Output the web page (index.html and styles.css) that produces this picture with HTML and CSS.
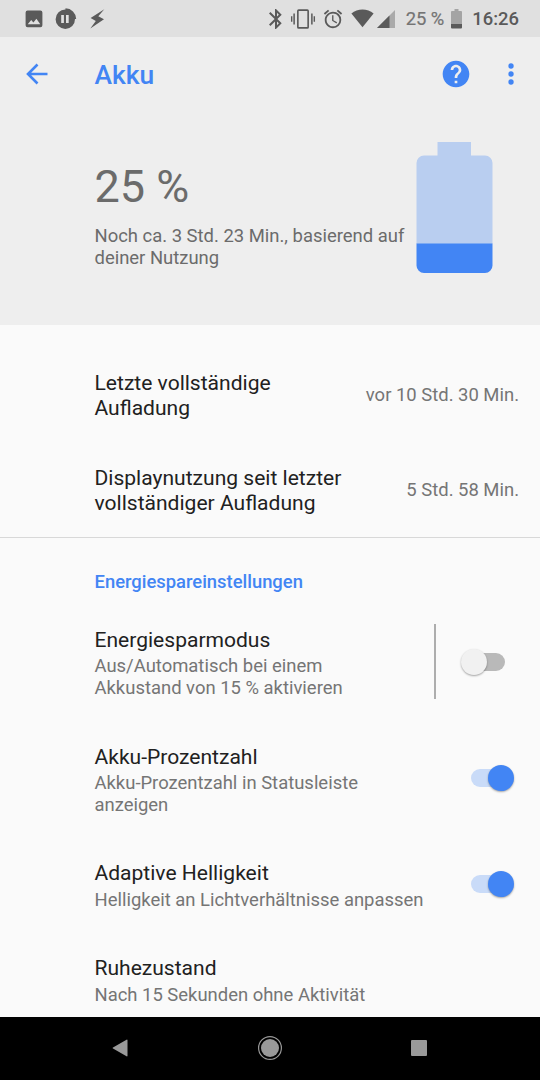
FILE: index.html
```html
<!DOCTYPE html>
<html lang="de">
<head>
  <meta charset="UTF-8">
  <meta name="viewport" content="width=device-width, initial-scale=1.0">
  <title>Akku</title>
  <link rel="stylesheet" href="styles.css">
</head>
<body>
  <!-- status bar: notifications left, system icons right -->
  <div class="status-bar">
    <div class="notifications">
      <svg width="18" height="18" viewBox="0 0 18 18"><path fill-rule="evenodd" d="M2.600.5h12.800a2 2 0 0 1 2 2v12.800a2 2 0 0 1-2 2H2.600a2 2 0 0 1-2-2V2.500a2 2 0 0 1 2-2zM2.700 14.300h12.600l-3.900-5.600-3 3.800-2.200-2.400z"/></svg>
      <svg width="22" height="22" viewBox="0 0 22 22"><path fill-rule="evenodd" d="M10.500.3A11 11 0 0 1 21.200 11H20a9.700 9.700 0 1 1-9.500-9.500zM6.200 7v8h2.700V7zM11 7v8h2.700V7z"/></svg>
      <svg class="bolt" width="15" height="20" viewBox="0 0 15 20"><path d="M14.300.3 8.300 7.200l5.700 3.100L.3 19.500l5.500-7.400L.6 9z"/></svg>
    </div>
    <div class="system">
      <svg width="24" height="24" viewBox="0 0 24 24"><path d="M17.710 7.710L12 2h-1v7.590L6.410 5 5 6.410 10.590 12 5 17.590 6.410 19 11 14.410V22h1l5.710-5.710-4.300-4.290 4.300-4.290zM13 5.830l1.880 1.880L13 9.590V5.830zm1.880 10.460L13 18.170v-3.760l1.880 1.880z"/></svg>
      <svg class="vibrate" width="26" height="26" viewBox="0 0 24 24"><path d="M.9 14.500h1.300v-5H.9zm2.200 2.500h1.400V7H3.100zm18.700-7.500v5h1.300v-5zM19.500 17h1.400V7h-1.400zM16 3H8a1.500 1.500 0 0 0-1.500 1.500v15A1.500 1.500 0 0 0 8 21h8a1.500 1.500 0 0 0 1.500-1.500v-15A1.500 1.500 0 0 0 16 3zm0 16.400H8V4.600h8z"/></svg>
      <svg class="alarm" width="22" height="22" viewBox="0 0 24 24"><path d="M22 5.720l-4.600-3.860-1.290 1.530 4.600 3.860L22 5.720zM7.880 3.390L6.600 1.860 2 5.710l1.290 1.530 4.590-3.850zM12.500 8H11v6l4.750 2.850.75-1.230-4-2.370V8zM12 4c-4.970 0-9 4.030-9 9s4.020 9 9 9a9 9 0 0 0 0-18zm0 16c-3.870 0-7-3.130-7-7s3.130-7 7-7 7 3.130 7 7-3.130 7-7 7z"/></svg>
      <svg class="wifi" width="23" height="19" viewBox="0 0 23 19"><path d="M11.500 18.300.4 4.400C3.500 2 7.400.6 11.500.6S19.500 2 22.600 4.400z"/></svg>
      <svg class="signal" width="18" height="18" viewBox="0 0 18 18"><path opacity=".4" d="M0 18 18 0v18z"/><path d="M0 18 12.500 5.500V18z"/></svg>
      <span class="percent">25 %</span>
      <svg class="battery" width="11" height="20" viewBox="0 0 11 20"><path opacity=".45" d="M3.500 0h4v2H10a1 1 0 0 1 1 1v12H0V3a1 1 0 0 1 1-1h2.500z"/><path d="M0 15h11v3.500a1 1 0 0 1-1 1H1a1 1 0 0 1-1-1z"/></svg>
      <span class="clock">16:26</span>
    </div>
  </div>

  <!-- toolbar -->
  <header>
    <svg class="back" width="22" height="22" viewBox="0 0 22 22"><path d="M21.500 11H2.500M11.500 1.500 2 11l9.500 9.500"/></svg>
    <h1>Akku</h1>
    <svg class="help" width="32" height="32" viewBox="0 0 24 24"><path d="M12 2C6.480 2 2 6.480 2 12s4.480 10 10 10 10-4.480 10-10S17.520 2 12 2zm1 17h-2v-2h2v2zm2.070-7.750l-.9.920C13.450 12.900 13 13.500 13 15h-2v-.5c0-1.100.45-2.100 1.170-2.830l1.240-1.260c.37-.36.590-.860.590-1.410 0-1.100-.9-2-2-2s-2 .9-2 2H8c0-2.210 1.790-4 4-4s4 1.790 4 4c0 .880-.360 1.680-.930 2.250z"/></svg>
    <svg class="more" width="6" height="22" viewBox="0 0 6 22"><circle cx="3" cy="3" r="2.700"/><circle cx="3" cy="11" r="2.700"/><circle cx="3" cy="19" r="2.700"/></svg>
  </header>

  <!-- battery summary -->
  <section class="summary">
    <div class="summary-text">
      <div class="level">25 %</div>
      <p>Noch ca. 3 Std. 23 Min., basierend auf deiner Nutzung</p>
    </div>
    <svg class="big-battery" width="77" height="131" viewBox="0 0 77 131"><path fill="#b9cef0" d="M21.500 0H55v13.500h14a7.500 7.500 0 0 1 7.500 7.500v81H.5V21A7.500 7.500 0 0 1 8 13.500h13.500z"/><path fill="#4285f4" d="M.5 101.500h76v22a7.500 7.500 0 0 1-7.500 7.500H8a7.500 7.500 0 0 1-7.500-7.500z"/></svg>
  </section>

  <main>
    <section class="usage">
      <div class="usage-row">
        <h2>Letzte vollständige Aufladung</h2>
        <span>vor 10 Std. 30 Min.</span>
      </div>
      <div class="usage-row">
        <h2>Displaynutzung seit letzter vollständiger Aufladung</h2>
        <span>5 Std. 58 Min.</span>
      </div>
    </section>

    <section class="settings">
      <h3>Energiespareinstellungen</h3>
      <div class="setting">
        <div class="setting-text narrow">
          <h2>Energiesparmodus</h2>
          <p>Aus/Automatisch bei einem Akkustand von 15 % aktivieren</p>
        </div>
        <div class="separator"></div>
        <div class="switch off"></div>
      </div>
      <div class="setting">
        <div class="setting-text">
          <h2>Akku-Prozentzahl</h2>
          <p>Akku-Prozentzahl in Statusleiste anzeigen</p>
        </div>
        <div class="switch on"></div>
      </div>
      <div class="setting">
        <div class="setting-text">
          <h2>Adaptive Helligkeit</h2>
          <p>Helligkeit an Lichtverhältnisse anpassen</p>
        </div>
        <div class="switch on"></div>
      </div>
      <div class="setting">
        <div class="setting-text">
          <h2>Ruhezustand</h2>
          <p>Nach 15 Sekunden ohne Aktivität</p>
        </div>
      </div>
    </section>
  </main>

  <!-- android navigation bar -->
  <nav>
    <svg width="26" height="26" viewBox="0 0 26 26"><path d="M20.500 5.300v15.400a.7.700 0 0 1-1 .6L6 13.600a.7.700 0 0 1 0-1.200l13.500-7.700a.7.700 0 0 1 1 .6z"/></svg>
    <svg width="26" height="26" viewBox="0 0 26 26"><circle cx="13" cy="13" r="9"/><circle class="ring" cx="13" cy="13" r="11.400"/></svg>
    <svg width="26" height="26" viewBox="0 0 26 26"><rect x="5" y="5" width="16" height="16" rx="1"/></svg>
  </nav>
</body>
</html>
```
FILE: styles.css
```css
* {
  box-sizing: border-box;
}

body {
  font-family: Roboto, sans-serif;
  background: #fafafa;
  color: #212121;
  margin: 0;
  height: 1080px;
  display: flex;
  flex-direction: column;
  overflow: hidden;
}

svg {
  display: block;
  flex-shrink: 0;
}

h1, h2, h3, p {
  margin: 0;
}

/* status bar */
.status-bar {
  height: 37px;
  flex-shrink: 0;
  background: #e0e0e0;
  display: flex;
  justify-content: space-between;
  align-items: center;
  padding: 0 21px 0 25px;
  fill: #5a5a5a;
}

.notifications, .system {
  display: flex;
  align-items: center;
}

.notifications {
  gap: 12px;
}

.bolt {
  margin-left: 1px;
}

.vibrate {
  margin-left: 2px;
}

.alarm {
  margin-left: 6px;
}

.wifi {
  margin-left: 7px;
}

.signal {
  margin-left: 3px;
}

.percent {
  margin-left: 11px;
  font-size: 18.4px;
  color: #747474;
  -webkit-text-stroke: 0.2px #747474;
}

.battery {
  margin-left: 7px;
}

.clock {
  margin-left: 10px;
  font-size: 18.4px;
  font-weight: 500;
  color: #5a5a5a;
}

/* toolbar */
header {
  height: 73px;
  flex-shrink: 0;
  background: #eeeeee;
  display: flex;
  align-items: center;
  padding: 0 26px;
}

header h1 {
  flex: 1;
  margin-left: 46.5px;
  padding-top: 2px;
  font-size: 26.4px;
  font-weight: 500;
  color: #4285f4;
}

.back {
  fill: none;
  stroke: #4285f4;
  stroke-width: 2.6;
}

.help, .more {
  fill: #4285f4;
}

.more {
  margin-left: 36px;
}

/* battery summary */
.summary {
  height: 215px;
  flex-shrink: 0;
  background: #eeeeee;
  display: flex;
  padding: 32px 47px 0 94.5px;
}

.summary-text {
  flex: 1;
  padding-top: 18px;
}

.level {
  font-size: 45px;
  line-height: 53px;
  color: #6b6b6b;
}

.summary p {
  width: 320px;
  margin-top: 13px;
  font-size: 18.45px;
  line-height: 21.5px;
  color: #6b6b6b;
}

main {
  flex: 1;
  min-height: 0;
  overflow: hidden;
}

h2 {
  font-size: 21.05px;
  font-weight: 400;
  line-height: 24.6px;
}

/* usage since last charge */
.usage {
  padding-top: 22px;
  border-bottom: 1px solid #d8d8d8;
}

.usage-row {
  height: 95px;
  display: flex;
  justify-content: space-between;
  align-items: center;
  padding: 0 21px 0 94.5px;
}

.usage-row h2 {
  width: 260px;
  padding-top: 2.4px;
}

.usage-row:first-child h2 {
  width: 230px;
}

.usage-row span {
  font-size: 18.45px;
  color: #757575;
}

/* power saving settings */
.settings h3 {
  padding: 33px 0 11px 94.5px;
  font-size: 18.4px;
  font-weight: 500;
  line-height: 21.5px;
  color: #4285f4;
}

.setting {
  display: flex;
  align-items: center;
  padding: 20.6px 25px 20.6px 94.5px;
}

.setting-text {
  flex: 1;
  padding-top: 4px;
}

.setting-text p {
  width: 335px;
  margin-top: 3.8px;
  font-size: 18.45px;
  line-height: 21.5px;
  color: #757575;
}

.narrow p {
  width: 280px;
}

.separator {
  width: 2px;
  height: 75px;
  margin: -4px 25px -4px 0;
  background: #adadad;
}

/* switches */
.switch {
  width: 44px;
  height: 26px;
  display: flex;
  align-items: center;
}

.switch::before {
  content: "";
  width: 34px;
  height: 18px;
  border-radius: 9px;
}

.switch::after {
  content: "";
  width: 26px;
  height: 26px;
  border-radius: 50%;
  box-shadow: 0 1px 2px rgba(0, 0, 0, 0.35);
}

.on::before {
  background: #c9dbf8;
}

.on::after {
  background: #4285f4;
  margin-left: -17px;
}

.off {
  flex-direction: row-reverse;
  justify-content: flex-end;
  margin-right: 10px;
}

.off::before {
  background: #b9b9b9;
  margin-left: -16px;
}

.off::after {
  background: #f1f1f1;
  z-index: 1;
}

/* navigation bar */
nav {
  height: 63px;
  flex-shrink: 0;
  background: #000;
  display: flex;
  justify-content: space-between;
  align-items: center;
  padding: 0 108px 1px 107px;
  fill: #999;
}

.ring {
  fill: none;
  stroke: #999;
  stroke-width: 1.2;
}
```
